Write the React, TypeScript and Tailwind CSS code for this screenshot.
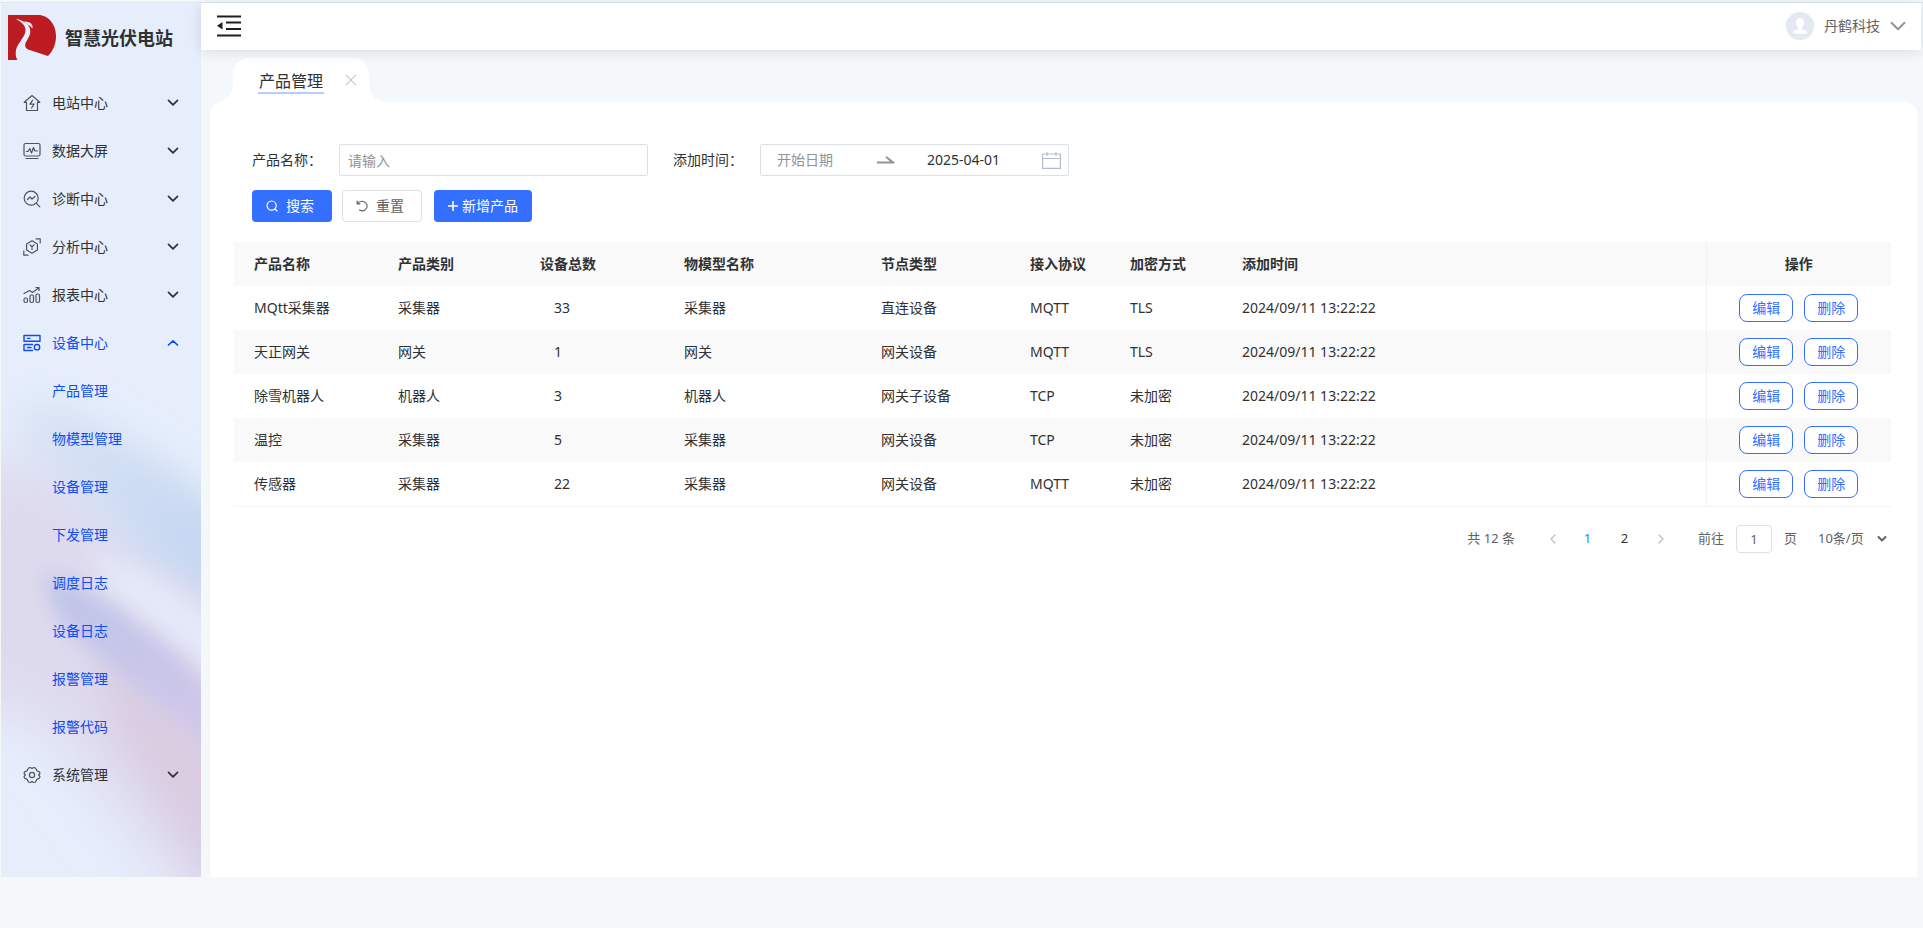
import { useState } from "react";
import type { ReactNode } from "react";

const svg = {
  fill: "none",
  stroke: "currentColor",
  strokeLinecap: "round" as const,
  strokeLinejoin: "round" as const,
  "aria-hidden": true,
};

function Icon({ children }: { children: ReactNode }) {
  return (
    <svg {...svg} viewBox="0 0 18 18" strokeWidth={1.2} className="h-[18px] w-[18px] shrink-0">
      {children}
    </svg>
  );
}

const icons = {
  station: (
    <Icon>
      <path d="M1.2 8.300 9 1.500 16.800 8.300H14.500V16.500H3.500V8.300Z" />
      <path d="M9.600 6.200 7 10.200H11L8.600 14" />
    </Icon>
  ),
  screen: (
    <Icon>
      <rect x="1" y="1.500" width="16" height="12.500" rx="1.500" />
      <path d="M3.500 9.500H5L6.800 6.500 8.500 11 10.500 5.500 12 9H14.500M3 16.500H15" />
    </Icon>
  ),
  diagnose: (
    <Icon>
      <circle cx="8.200" cy="8.200" r="7" />
      <path d="M4.500 9.500 7 7 9 9 12 6.500M13.200 13.200 16.800 16.800" />
    </Icon>
  ),
  analyse: (
    <Icon>
      <path d="M9 2.800 14.400 6V12L9 15.200 3.600 12V6ZM13 .800H17.200V5M.800 13V17.200H5M7 7 9 8.800 11 7M9 8.800V11.500" />
    </Icon>
  ),
  report: (
    <Icon>
      <rect x="1" y="12" width="3.500" height="4.500" rx="1.500" />
      <rect x="7" y="9" width="3.500" height="7.500" rx="1.500" />
      <rect x="13" y="8" width="3.500" height="8.500" rx="1.500" />
      <path d="M1 7.500 6.500 4.500 9.500 6.500 15.500 2M13 1.500H16V4.500" />
    </Icon>
  ),
  device: (
    <Icon>
      <path d="M1 1.500H17V7.200H1ZM4.500 4.400H7M9.500 10.500H1V16.500H9.500M4.500 13.500H8" strokeWidth={1.400} />
      <circle cx="14" cy="13.200" r="2.700" strokeWidth={1.400} />
    </Icon>
  ),
  system: (
    <Icon>
      <path d="M5.500 2 7.300 1.500 9 2.600 10.700 1.500 12.500 2 13.800 4.600 16.200 5.800 17 7.300 15.600 9 17 10.700 16.200 12.200 13.800 13.400 12.500 16 10.700 16.500 9 15.400 7.300 16.500 5.500 16 4.200 13.400 1.800 12.200 1 10.700 2.400 9 1 7.300 1.800 5.800 4.200 4.600Z" />
      <circle cx="9" cy="9" r="2.600" />
    </Icon>
  ),
};

const menu: { label: string; icon: keyof typeof icons; children?: string[] }[] = [
  { label: "电站中心", icon: "station" },
  { label: "数据大屏", icon: "screen" },
  { label: "诊断中心", icon: "diagnose" },
  { label: "分析中心", icon: "analyse" },
  { label: "报表中心", icon: "report" },
  {
    label: "设备中心",
    icon: "device",
    children: ["产品管理", "物模型管理", "设备管理", "下发管理", "调度日志", "设备日志", "报警管理", "报警代码"],
  },
  { label: "系统管理", icon: "system" },
];

const columns = ["产品名称", "产品类别", "设备总数", "物模型名称", "节点类型", "接入协议", "加密方式", "添加时间"];

const rows = [
  ["MQtt采集器", "采集器", "33", "采集器", "直连设备", "MQTT", "TLS", "2024/09/11 13:22:22"],
  ["天正网关", "网关", "1", "网关", "网关设备", "MQTT", "TLS", "2024/09/11 13:22:22"],
  ["除雪机器人", "机器人", "3", "机器人", "网关子设备", "TCP", "未加密", "2024/09/11 13:22:22"],
  ["温控", "采集器", "5", "采集器", "网关设备", "TCP", "未加密", "2024/09/11 13:22:22"],
  ["传感器", "采集器", "22", "采集器", "网关设备", "MQTT", "未加密", "2024/09/11 13:22:22"],
];

function Logo() {
  return (
    <svg viewBox="0 0 48 45" className="h-[45px] w-12 shrink-0" aria-hidden="true">
      <path d="M0 0H30C41 0 48 10 48 21C48 29 45 36 40 41L20 34.500C17 33 16.500 30 18 27C21 22 23 19 22 14C21 9 15 5 7 3.500C14 7 18 11 17.500 16C17 22 9 29 8 35C7.400 39 7.600 42 9.500 45H0Z" fill="#bb1b21" />
      <path d="M16 6.500C19 6 23 8 24 13C23 11.500 21.500 10.500 20 10Z" fill="#e7eefc" />
      <path d="M19 8C22 7.500 24.500 10 24 13" fill="none" stroke="#e7eefc" strokeWidth="1.200" />
    </svg>
  );
}

function SidebarBackdrop() {
  return (
    <svg
      className="absolute inset-0 h-full w-full"
      viewBox="0 0 200 874"
      preserveAspectRatio="none"
      aria-hidden="true"
    >
      <defs>
        <filter id="soft" filterUnits="userSpaceOnUse" x="-200" y="200" width="600" height="900">
          <feGaussianBlur stdDeviation="28" />
        </filter>
        <filter id="mid" filterUnits="userSpaceOnUse" x="-200" y="200" width="600" height="900">
          <feGaussianBlur stdDeviation="18" />
        </filter>
        <filter id="fine" filterUnits="userSpaceOnUse" x="-200" y="200" width="600" height="900">
          <feGaussianBlur stdDeviation="10" />
        </filter>
        <linearGradient id="violet" x1="0" y1="0" x2="1" y2="1">
          <stop offset="0" stopColor="#bcc5e8" />
          <stop offset="0.500" stopColor="#c9c6e9" />
          <stop offset="1" stopColor="#d5c7e8" />
        </linearGradient>
        <linearGradient id="blue" x1="0" y1="0" x2="1" y2="1">
          <stop offset="0" stopColor="#dbe5f4" />
          <stop offset="1" stopColor="#bdd1f1" />
        </linearGradient>
      </defs>
      <rect width="200" height="874" fill="#e6eefc" />
      <path d="M-60 470 50 450 130 520 260 600 260 960 160 870 60 740 -60 680Z" fill="#dedaee" filter="url(#soft)" />
      <path d="M10 395 70 405 150 450 260 530V615L150 560 90 500 30 450Z" fill="url(#blue)" filter="url(#mid)" />
      <path d="M90 545 150 570 260 650V710L170 640 110 595Z" fill="#e4e8f8" filter="url(#fine)" />
      <path d="M90 640 150 680 260 760V960L180 830 120 740Z" fill="#d9cce1" filter="url(#mid)" />
      <path d="M40 572 75 580 125 612 180 655 260 740V780L160 705 105 660 60 622Z" fill="url(#violet)" filter="url(#fine)" />
    </svg>
  );
}

function Chevron({ up = false, className = "" }: { up?: boolean; className?: string }) {
  return (
    <svg {...svg} viewBox="0 0 12 8" strokeWidth={1.7} className={`h-2 w-3 shrink-0 ${className}`}>
      <path d={up ? "M1.500 6 6 1.800 10.500 6" : "M1.500 1.300 6 5.800 10.500 1.300"} />
    </svg>
  );
}

function Sidebar() {
  const [open, setOpen] = useState("设备中心");
  return (
    <aside className="relative ml-px w-[200px] shrink-0 overflow-hidden">
      <SidebarBackdrop />
      <div className="relative">
        <div className="flex items-center gap-[9px] pt-3 pb-[10px] pl-[7px]">
          <Logo />
          <h1 className="pt-0.5 text-[18px] font-bold text-[#303133]">智慧光伏电站</h1>
        </div>
        <nav className="pt-[9px]" aria-label="主导航">
          {menu.map((item) => {
            const active = open === item.label;
            return (
              <div key={item.label}>
                <button
                  type="button"
                  aria-expanded={active}
                  onClick={() => setOpen(active ? "" : item.label)}
                  className={`flex h-12 w-full items-center pr-[22px] pl-[22px] text-left ${active ? "text-[#0f4cf2]" : "text-[#303133]"}`}
                >
                  <span className={active ? "" : "text-[#505358]"}>{icons[item.icon]}</span>
                  <span className="ml-[11px] flex-1">{item.label}</span>
                  <Chevron up={active} />
                </button>
                {active &&
                  item.children?.map((child) => (
                    <a key={child} href="#" className="flex h-12 items-center pl-[51px] text-[#0f4cf2]">
                      {child}
                    </a>
                  ))}
              </div>
            );
          })}
        </nav>
      </div>
    </aside>
  );
}

function TopBar() {
  return (
    <header className="relative z-10 mr-0.5 flex h-[47px] items-center justify-between bg-white pr-[15px] pb-px pl-4 shadow-[0_2px_12px_rgba(0,21,41,0.12)]">
      <button type="button" aria-label="收起菜单" className="text-[#1f1f1f]">
        <svg viewBox="0 0 24 22" className="h-[22px] w-6" fill="currentColor" aria-hidden="true">
          <path d="M0 .500H24V2.500H0ZM9 6.500H24V8.500H9ZM9 13H24V15H9ZM0 19.500H24V21.500H0ZM0 10.800 5.500 7V14.600Z" />
        </svg>
      </button>
      <button type="button" className="flex items-center text-[#606266]">
        <svg viewBox="0 0 28 28" className="mr-[10px] h-7 w-7" aria-hidden="true">
          <circle cx="14" cy="14" r="14" fill="#e4e8f3" />
          <path d="M14 6C17 6 18.200 8 18 11C17.800 13.500 16 14.500 16 16.500C16 18 21 18 21 20.500C21 21.700 19 22 14 22C9 22 7 21.700 7 20.500C7 18 12 18 12 16.500C12 14.500 10.200 13.500 10 11C9.800 8 11 6 14 6Z" fill="#fff" />
        </svg>
        丹鹤科技
        <svg {...svg} viewBox="0 0 16 10" strokeWidth={1.9} className="ml-[10px] h-[10px] w-4 text-[#909399]">
          <path d="M1.500 1.800 8 8.200 14.500 1.800" />
        </svg>
      </button>
    </header>
  );
}

function PageTab() {
  return (
    <div className="flex pt-2 pl-8">
      <div className="relative flex h-11 w-[136px] items-center justify-between rounded-t-2xl bg-white pr-3 pl-[25px]">
        <span className="absolute right-full bottom-0 h-4 w-4 bg-[radial-gradient(circle_at_0_0,transparent_15px,#fff_16px)]" />
        <span className="absolute bottom-0 left-full h-4 w-4 bg-[radial-gradient(circle_at_100%_0,transparent_15px,#fff_16px)]" />
        <a href="#" className="border-b-2 border-[#b5cdff] px-px pt-1 text-base leading-[22px] text-[#303133]">
          产品管理
        </a>
        <button type="button" aria-label="关闭标签页" className="text-[#c4c7ce]">
          <svg {...svg} viewBox="0 0 12 12" strokeWidth={1.2} className="h-3 w-3">
            <path d="M1.200 1.200 10.800 10.800M10.800 1.200 1.200 10.800" />
          </svg>
        </button>
      </div>
    </div>
  );
}

function SearchForm() {
  return (
    <form className="px-[18px]" onSubmit={(e) => e.preventDefault()}>
      <div className="flex items-center">
        <label htmlFor="product-name" className="w-[87px] shrink-0">
          产品名称：
        </label>
        <input
          id="product-name"
          placeholder="请输入"
          className="h-8 w-[309px] rounded-xs border border-[#dcdfe6] px-2 outline-none placeholder:text-[#8f939b]"
        />
        <label htmlFor="date-start" className="ml-[25px] w-[87px] shrink-0">
          添加时间：
        </label>
        <div className="flex h-8 w-[309px] items-center rounded-xs border border-[#dcdfe6] pr-[7px] pl-4">
          <input
            id="date-start"
            placeholder="开始日期"
            className="w-[100px] outline-none placeholder:text-[#8f939b]"
          />
          <svg viewBox="0 0 18 8" className="h-2 w-[18px] shrink-0 text-[#909399]" fill="currentColor" aria-hidden="true">
            <path d="M0 5.500H13L8.500 1.500 9.500 0 17.500 6.200V7.500H0Z" />
          </svg>
          <input
            aria-label="结束日期"
            defaultValue="2025-04-01"
            className="ml-8 min-w-0 flex-1 outline-none"
          />
          <svg {...svg} viewBox="0 0 19 17" strokeWidth={1.2} className="h-[17px] w-[19px] shrink-0 text-[#b4bccc]">
            <path d="M.600 2H18.400V16.400H.600ZM.600 6.500H18.400M5 .500V3.500M14 .500V3.500" />
          </svg>
        </div>
      </div>
      <div className="mt-[14px] flex">
        <button type="submit" className="flex h-8 w-20 items-center gap-2 rounded-sm bg-[#3370ff] pl-[14px] text-white">
          <svg {...svg} viewBox="0 0 12 12" strokeWidth={1.2} className="h-3 w-3">
            <circle cx="5.600" cy="5.600" r="4.600" />
            <path d="M9 9 11 11" />
          </svg>
          搜索
        </button>
        <button
          type="reset"
          className="ml-[10px] flex h-8 w-20 items-center gap-2 rounded-sm border border-[#dcdfe6] pl-[13px] text-[#606266]"
        >
          <svg {...svg} viewBox="0 0 12 12" strokeWidth={1.2} className="h-3 w-3">
            <path d="M1.200 1.200V3.800H4M1.500 3.600C3 1.500 6 .800 8.500 2A4.500 4.500 0 0 1 10.600 8C9 10.700 6 11.300 3.500 10" />
          </svg>
          重置
        </button>
        <button type="button" className="ml-3 flex h-8 w-[98px] items-center justify-center gap-1 rounded-sm bg-[#3370ff] text-white">
          <svg {...svg} viewBox="0 0 10 10" strokeWidth={1.6} className="h-[10px] w-[10px]">
            <path d="M5 .500V9.500M.500 5H9.500" />
          </svg>
          新增产品
        </button>
      </div>
    </form>
  );
}

function ProductTable() {
  const fixed = "border-l border-[#f1f1f2] text-center";
  return (
    <table className="mt-5 w-full table-fixed text-left text-[#303133]">
      <colgroup>
        <col className="w-36" />
        <col className="w-[142px]" />
        <col className="w-[144px]" />
        <col className="w-[197px]" />
        <col className="w-[149px]" />
        <col className="w-[100px]" />
        <col className="w-28" />
        <col />
        <col className="w-[185px]" />
      </colgroup>
      <thead>
        <tr className="h-11 bg-[#f9f9f9]">
          {columns.map((c) => (
            <th key={c} scope="col" className="pl-5 font-bold">
              {c}
            </th>
          ))}
          <th scope="col" className={`${fixed} font-bold`}>
            操作
          </th>
        </tr>
      </thead>
      <tbody>
        {rows.map((row, i) => (
          <tr key={row[0]} className="h-11 last:border-b last:border-[#f3f3f3] even:bg-[#f9f9f9]">
            {row.map((value, j) => (
              <td key={columns[j]} className={j === 2 ? "pl-[34px]" : "pl-5"}>
                {value}
              </td>
            ))}
            <td className={fixed}>
              <div className="flex justify-center gap-[11px]">
                {["编辑", "删除"].map((action) => (
                  <button
                    key={`${action}-${i}`}
                    type="button"
                    className="h-7 w-[54px] rounded-lg border border-[#3370ff] bg-white text-[#3370ff]"
                  >
                    {action}
                  </button>
                ))}
              </div>
            </td>
          </tr>
        ))}
      </tbody>
    </table>
  );
}

function Pagination() {
  return (
    <nav aria-label="分页" className="mt-[18px] flex items-center justify-end pr-1 text-[13px] text-[#606266]">
      <span className="mr-[34px]">共 12 条</span>
      <button type="button" aria-label="上一页" className="text-[#b8bcc4]">
        <svg {...svg} viewBox="0 0 8 10" strokeWidth={1.2} className="h-[10px] w-2">
          <path d="M6 1 2 5 6 9" />
        </svg>
      </button>
      <button type="button" aria-current="page" className="ml-3 w-[37px] text-[#1989fa]">
        1
      </button>
      <button type="button" className="w-[37px] text-[#303133]">
        2
      </button>
      <button type="button" aria-label="下一页" className="ml-[14px] text-[#b8bcc4]">
        <svg {...svg} viewBox="0 0 8 10" strokeWidth={1.2} className="h-[10px] w-2">
          <path d="M2 1 6 5 2 9" />
        </svg>
      </button>
      <label htmlFor="goto-page" className="ml-[33px]">
        前往
      </label>
      <input
        id="goto-page"
        defaultValue="1"
        className="mx-3 h-7 w-9 rounded-sm border border-[#dcdfe6] text-center outline-none"
      />
      <span>页</span>
      <div className="relative ml-[21px] flex w-[69px] items-center">
        <select aria-label="每页条数" className="w-full appearance-none bg-transparent outline-none">
          <option>10条/页</option>
          <option>20条/页</option>
          <option>50条/页</option>
        </select>
        <svg {...svg} viewBox="0 0 10 8" strokeWidth={2} className="pointer-events-none absolute right-0 h-2 w-[10px]">
          <path d="M1.500 2 5 5.500 8.500 2" />
        </svg>
      </div>
    </nav>
  );
}

export default function App() {
  return (
    <div className="min-h-screen bg-[#f4f8fb] pt-0.5 font-['Noto_Sans','Noto_Sans_CJK_SC',sans-serif] text-sm text-[#303133]">
      <div className="flex min-h-[calc(100vh-53px)] border-t border-[#dfe7f1]">
        <Sidebar />
        <div className="flex min-w-0 flex-1 flex-col">
          <TopBar />
          <PageTab />
          <main className="mr-1.5 ml-[9px] flex-1 rounded-t-xl bg-white pt-[42px] pr-[26px] pl-6">
            <SearchForm />
            <ProductTable />
            <Pagination />
          </main>
        </div>
      </div>
    </div>
  );
}
